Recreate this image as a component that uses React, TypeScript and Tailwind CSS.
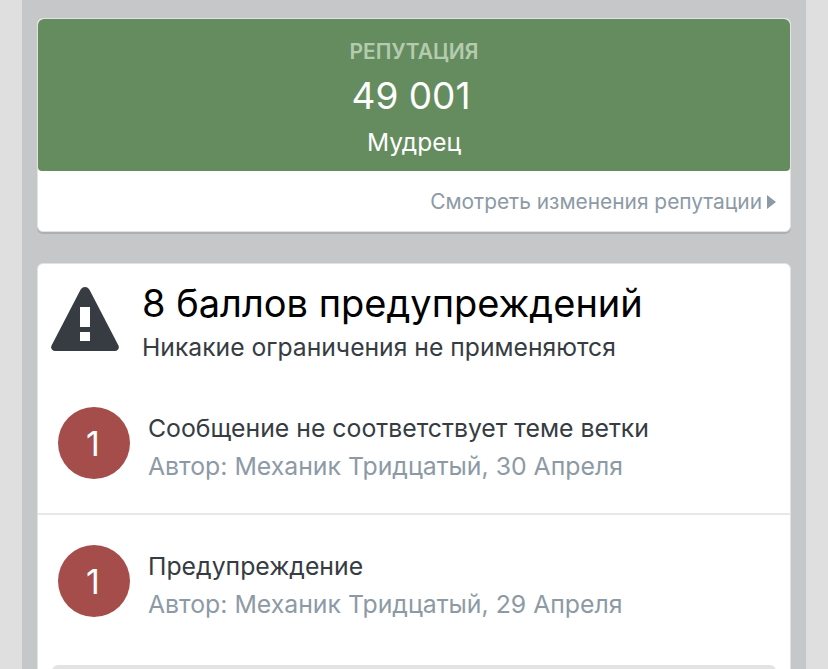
const warnings = [
  { title: "Сообщение не соответствует теме ветки", meta: "Автор: Механик Тридцатый, 30 Апреля" },
  { title: "Предупреждение", meta: "Автор: Механик Тридцатый, 29 Апреля" },
];

function WarningIcon() {
  return (
    <svg width="68" height="64" viewBox="0 0 68 64" className="shrink-0 mt-[23px]">
      <path
        d="M34 0c2 0 3.600 1.200 4.500 2.800l28.800 55.400c1.400 2.800-.2 5.800-3.300 5.800H4c-3.100 0-4.700-3-3.300-5.800L29.500 2.800C30.400 1.200 32 0 34 0z"
        fill="#363c42"
      />
      <path d="M29 20h10v20H29z" fill="#fff" />
      <path d="M29 45h10v9H29z" fill="#fff" />
    </svg>
  );
}

function WarningRow({ title, meta, last }: { title: string; meta: string; last?: boolean }) {
  return (
    <div className={`flex items-start h-[138px] pt-[30px] pl-5 ${last ? "" : "border-b-2 border-[#e8e8e9]"}`}>
      <div className="w-[72px] h-[72px] rounded-full bg-[#a54d4a] text-white text-[34px] flex items-center justify-center pr-[2px]">
        1
      </div>
      <div className="ml-[18px] pt-[2px]">
        <div className="text-[24.8px] leading-[38px] text-[#363c42]">{title}</div>
        <div className="text-[24.8px] leading-[38px] text-[#8d9aa6]">{meta}</div>
      </div>
    </div>
  );
}

export default function App() {
  return (
    <div className="h-[669px] overflow-hidden bg-[#dfdfdf] px-[22px] font-['Inter',sans-serif]">
      <div className="h-full bg-[#c6c7c9] px-[15px] pt-[18px]">
        <div className="rounded-md bg-white border border-[#e2e2e3] shadow-[0_2px_0_#aeafb1] h-[214px]">
          <div className="h-[152px] rounded-t-md rounded-b-sm bg-[#658c5e] flex flex-col items-center pt-[21px]">
            <div className="text-[21px] leading-6 font-semibold text-[#b4cbb0]">РЕПУТАЦИЯ</div>
            <div className="text-[37px] leading-[44px] mt-[10px] pr-[6px] text-white">49 001</div>
            <div className="text-[24.5px] leading-7 mt-[10px] text-white">Мудрец</div>
          </div>
          <div className="flex items-center justify-end h-[60px] pt-[2px] pr-[14px] text-[20.9px] text-[#8d9aa6]">
            Смотреть изменения репутации
            <svg width="9" height="14" viewBox="0 0 9 14" className="ml-[5px]">
              <path d="M0 0l9 7-9 7z" fill="#8d9aa6" />
            </svg>
          </div>
        </div>
        <div className="mt-[31px] rounded-md bg-white border border-[#e2e2e3]">
          <div className="flex pl-[13px] h-[113px]">
            <WarningIcon />
            <div className="ml-[23px] pt-[19px]">
              <div className="text-[38px] leading-10 text-black">8 баллов предупреждений</div>
              <div className="text-[24.7px] leading-7 mt-[10px] text-[#363c42]">Никакие ограничения не применяются</div>
            </div>
          </div>
          {warnings.map((w, i) => (
            <WarningRow key={i} title={w.title} meta={w.meta} last={i === warnings.length - 1} />
          ))}
          <div className="mx-[14px] mt-[12px] h-10 rounded-t-md bg-[#e3e3e4]" />
        </div>
      </div>
    </div>
  );
}
